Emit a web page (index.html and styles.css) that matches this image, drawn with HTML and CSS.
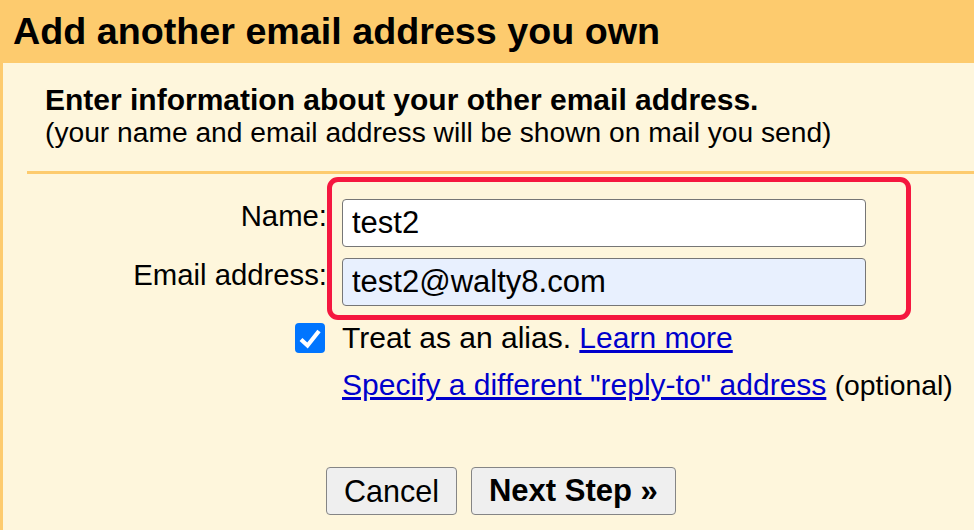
FILE: index.html
```html
<!DOCTYPE html>
<html>
<head>
  <meta charset="utf-8">
  <title>Add another email address you own</title>
  <link rel="stylesheet" href="styles.css">
</head>
<body>
  <div class="header">Add another email address you own</div>

  <div class="main">
    <div class="intro">
      <div class="intro-title">Enter information about your other email address.</div>
      <div class="intro-sub">(your name and email address will be shown on mail you send)</div>
    </div>

    <div class="divider"></div>

    <div class="fields">
      <div class="row">
        <label class="label">Name:</label>
        <input class="field" type="text" value="test2">
      </div>
      <div class="row">
        <label class="label">Email address:</label>
        <input class="field field-filled" type="text" value="test2@walty8.com">
      </div>
    </div>

    <div class="row row-option">
      <div class="label">
        <span class="check">
          <svg width="30" height="30" viewBox="0 0 30 30">
            <path d="M6 16.5 L12.5 22.5 L24 8" fill="none" stroke="#fff" stroke-width="4.2"/>
          </svg>
        </span>
      </div>
      <div class="option-text">Treat as an alias. <a href="#" class="link">Learn more</a></div>
    </div>

    <div class="row row-reply">
      <div class="label"></div>
      <div class="option-text"><a href="#" class="link">Specify a different "reply-to" address</a> <span class="optional">(optional)</span></div>
    </div>

    <div class="buttons">
      <button class="btn">Cancel</button>
      <button class="btn btn-next">Next Step &raquo;</button>
    </div>

    <!-- annotation round the two fields -->
    <div class="highlight"></div>
  </div>
</body>
</html>
```

FILE: styles.css
```css
body {
  margin: 0;
  background: #fef6dc;
  font-family: "Liberation Sans", Arial, sans-serif;
  color: #000;
}

/* top bar */
.header {
  height: 63px;
  line-height: 63px;
  padding-left: 13px;
  background: #fdcb6e;
  font-size: 37.7px;
  font-weight: bold;
  white-space: nowrap;
}

.main {
  position: relative;
  border-left: 3px solid #fdcb6e;
  height: 467px;
  box-sizing: border-box;
}

.intro {
  padding: 20px 0 0 42px;
}

.intro-title {
  font-size: 30px;
  font-weight: bold;
  line-height: 33px;
}

.intro-sub {
  font-size: 28.2px;
  line-height: 33px;
}

.divider {
  margin: 22px 0 0 24px;
  height: 3px;
  background: #fdcb6e;
}

/* form rows */
.fields {
  display: flex;
  flex-direction: column;
  gap: 11px;
  margin-top: 25px;
}

.row {
  display: flex;
  align-items: flex-start;
}

.label {
  width: 324px;
  flex: none;
  text-align: right;
  font-size: 29.3px;
  line-height: 33px;
}

.field {
  margin-left: 15px;
  width: 524px;
  height: 48px;
  box-sizing: border-box;
  padding: 0 9px;
  border: 1px solid #767676;
  border-radius: 4px;
  background: #fff;
  font-family: "Liberation Sans", Arial, sans-serif;
  font-size: 31px;
  color: #000;
}

.field-filled {
  background: #e8f0fe;
}

.row-option {
  margin-top: 14px;
  align-items: center;
  height: 36px;
}

.row-option .label {
  display: flex;
  justify-content: flex-end;
  padding-right: 2px;
  box-sizing: border-box;
}

.check {
  width: 30px;
  height: 30px;
  border-radius: 4px;
  background: #0075ff;
  display: block;
}

.check svg {
  display: block;
}

.option-text {
  margin-left: 15px;
  font-size: 30px;
  line-height: 36px;
  white-space: nowrap;
}

.row-reply {
  margin-top: 11px;
}

.link {
  color: #0000cc;
  text-decoration: underline;
}

.optional {
  font-size: 28.3px;
}

.buttons {
  display: flex;
  gap: 14px;
  margin: 64px 0 0 323px;
}

.btn {
  height: 48px;
  padding: 0 17px;
  border: 1px solid #858585;
  border-radius: 4px;
  background: #efefef;
  font-family: "Liberation Sans", Arial, sans-serif;
  font-size: 30.5px;
  color: #000;
}

.btn-next {
  font-size: 31px;
  font-weight: bold;
}

/* red marker drawn over the fields */
.highlight {
  position: absolute;
  left: 324px;
  top: 114px;
  width: 584px;
  height: 143px;
  box-sizing: border-box;
  border: 5px solid #f5173f;
  border-radius: 11px;
}
```
